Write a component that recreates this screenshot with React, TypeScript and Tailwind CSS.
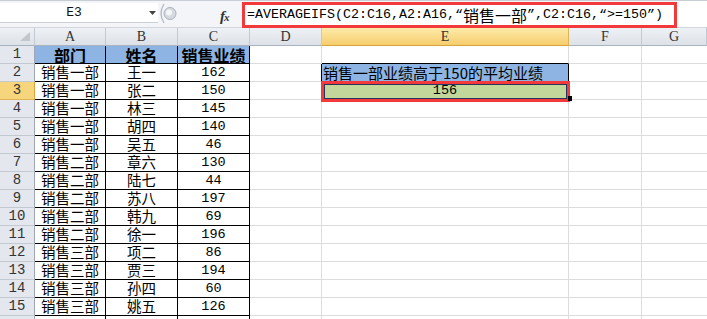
import React from "react";

const MONO = { fontFamily: '"Liberation Mono", "Noto Sans CJK SC", monospace' };

const rows: [string, string, string][] = [
  ["销售一部", "王一", "162"],
  ["销售一部", "张二", "150"],
  ["销售一部", "林三", "145"],
  ["销售一部", "胡四", "140"],
  ["销售一部", "吴五", "46"],
  ["销售二部", "章六", "130"],
  ["销售二部", "陆七", "44"],
  ["销售二部", "苏八", "197"],
  ["销售二部", "韩九", "69"],
  ["销售二部", "徐一", "196"],
  ["销售三部", "项二", "86"],
  ["销售三部", "贾三", "194"],
  ["销售三部", "孙四", "60"],
  ["销售三部", "姚五", "126"],
];

function ColHead({ label, w, active }: { label: string; w: string; active?: boolean }) {
  return (
    <div
      className={`${w} h-full flex items-center justify-center border-r border-b text-[14px] text-[#333] font-['Liberation_Serif',serif] ${
        active
          ? "bg-linear-to-b from-[#fdeba9] to-[#f6cd6c] border-r-[#e0b352] border-b-[#d9a43c]"
          : "bg-linear-to-b from-[#eef1f5] to-[#dde2e8] border-r-[#c3c9d1] border-b-[#a9b3bf]"
      }`}
    >
      {label}
    </div>
  );
}

function RowHead({ n, active }: { n: number; active?: boolean }) {
  return (
    <div
      style={MONO}
      className={`w-[35px] h-full flex items-center justify-center border-r border-b text-[14px] text-[#333] ${
        active
          ? "bg-[#f7d57d] border-r-[#d9a43c] border-b-[#e0b352]"
          : "bg-[#e4e8ee] border-r-[#9ea7b3] border-b-[#c3c9d1]"
      }`}
    >
      {n}
    </div>
  );
}

export default function App() {
  return (
    <div className="w-[707px] h-[319px] overflow-hidden bg-white flex flex-col">
      {/* formula bar */}
      <div className="h-[3px] bg-[#eef0f3] border-b border-[#c9ced5]" />
      <div className="h-[27px] flex bg-[#f3f5f8] border-b border-[#d2d6dc]">
        <div className="w-[158px] h-[20px] mt-[2px] bg-white border-b border-[#c9ced5] flex items-center relative">
          <span style={MONO} className="w-[148px] text-center text-[13px] text-[#111]">
            E3
          </span>
          <svg width="8" height="6" className="absolute left-[149px] top-[8px]">
            <path d="M0 0 L7 0 L3.5 4 Z" fill="#444" />
          </svg>
        </div>
        <div className="w-[84px] flex items-center relative">
          <svg width="30" height="26" viewBox="0 0 30 26" className="shrink-0">
            <path d="M6 3 Q0 12.5 6 22" stroke="#b3b9c2" strokeWidth="1.3" fill="none" />
            <circle cx="12" cy="12.5" r="6" fill="#d6dae0" stroke="#aab1bb" />
            <circle cx="11" cy="11.5" r="3" fill="#f4f5f7" />
          </svg>
          <span className="absolute left-[62px] top-[4px] italic font-bold text-[15px] text-[#333] font-['Liberation_Serif',serif] tracking-[-1px]">
            f<span className="text-[11px]">x</span>
          </span>
        </div>
        <div className="w-[435px] h-[26px] mt-[1px] bg-white border-[3px] border-[#f23a3d] flex items-center pl-[2px] text-black leading-none whitespace-nowrap">
          <span style={MONO} className="text-[13.33px]">=AVERAGEIFS(C2:C16,A2:A16,“</span>
          <span className="text-[16px] font-['Noto_Sans_CJK_SC',sans-serif]">销售一部</span>
          <span style={MONO} className="text-[13.33px]">”,C2:C16,“&gt;=150”)</span>
        </div>
        <div className="flex-1 bg-white" />
      </div>

      {/* column headers */}
      <div className="h-[18px] flex shrink-0">
        <div className="w-[35px] h-full bg-linear-to-b from-[#eef1f5] to-[#dde2e8] border-r border-b border-r-[#c3c9d1] border-b-[#a9b3bf] relative">
          <svg width="12" height="10" className="absolute right-[3px] bottom-[3px]">
            <path d="M11 0 L11 9 L1 9 Z" fill="#c2c7ce" />
          </svg>
        </div>
        <ColHead label="A" w="w-[71px]" />
        <ColHead label="B" w="w-[72px]" />
        <ColHead label="C" w="w-[72px]" />
        <ColHead label="D" w="w-[72px]" />
        <ColHead label="E" w="w-[247px]" active />
        <ColHead label="F" w="w-[73px]" />
        <ColHead label="G" w="flex-1" />
      </div>

      {/* row 1 */}
      <div className="h-[18px] flex shrink-0">
        <RowHead n={1} />
        {["部门", "姓名", "销售业绩"].map((t, i) => (
          <div
            key={t}
            className={`${i === 0 ? "w-[71px]" : "w-[72px]"} h-full bg-[#8db4e2] border-r border-b border-black flex items-center justify-center font-bold text-[16px] leading-none text-black font-['Noto_Sans_CJK_SC',sans-serif]`}
          >
            {t}
          </div>
        ))}
        <div className="w-[72px] h-full border-r border-b border-[#dadcdd]" />
        <div className="w-[247px] h-full border-r border-b border-r-[#dadcdd] border-b-black" />
        <div className="w-[73px] h-full border-r border-b border-[#dadcdd]" />
        <div className="flex-1 h-full border-b border-[#dadcdd]" />
      </div>

      {rows.map(([dept, name, score], idx) => {
        const n = idx + 2;
        return (
          <div key={n} className="h-[18px] flex shrink-0">
            <RowHead n={n} active={n === 3} />
            <div className="w-[71px] h-full border-r border-b border-black flex items-center justify-center text-[14.5px] leading-none text-black font-['Noto_Sans_CJK_SC',sans-serif]">
              {dept}
            </div>
            <div className="w-[72px] h-full border-r border-b border-black flex items-center justify-center text-[14.5px] leading-none text-black font-['Noto_Sans_CJK_SC',sans-serif]">
              {name}
            </div>
            <div style={MONO} className="w-[72px] h-full border-r border-b border-black flex items-center justify-center text-[13.5px] leading-none text-black">
              {score}
            </div>
            <div className={`w-[72px] h-full border-r border-b border-b-[#dadcdd] ${n === 2 ? "border-r-black" : "border-r-[#dadcdd]"}`} />
            {n === 2 ? (
              <div className="w-[247px] h-full bg-[#8db4e2] border-r border-b border-black flex items-center pl-[1px] text-[15px] leading-none text-black whitespace-nowrap font-['Noto_Sans_CJK_SC',sans-serif]">
                销售一部业绩高于150的平均业绩
              </div>
            ) : n === 3 ? (
              <div style={MONO} className="w-[247px] h-full bg-[#c4d79b] border-r border-b border-[#dadcdd] flex items-center justify-center text-[13.5px] leading-none text-black relative">
                156
                <div className="absolute top-[-1px] left-[-1px] right-[-2px] bottom-[-3px] border-[3px] border-[#f23a3d] z-10">
                  <div className="w-full h-full border border-[#27345c]" />
                </div>
                <div className="absolute right-[-4px] bottom-[-2px] w-[4px] h-[5px] bg-black z-20" />
              </div>
            ) : (
              <div className="w-[247px] h-full border-r border-b border-[#dadcdd]" />
            )}
            <div className="w-[73px] h-full border-r border-b border-[#dadcdd]" />
            <div className="flex-1 h-full border-b border-[#dadcdd]" />
          </div>
        );
      })}

      {/* row 16, mostly cut off */}
      <div className="h-[18px] flex shrink-0">
        <div className="w-[35px] h-full bg-[#e4e8ee] border-r border-[#9ea7b3]" />
        <div className="w-[71px] h-full border-r border-black" />
        <div className="w-[72px] h-full border-r border-black" />
        <div className="w-[72px] h-full border-r border-black" />
        <div className="w-[72px] h-full border-r border-[#dadcdd]" />
        <div className="w-[247px] h-full border-r border-[#dadcdd]" />
        <div className="w-[73px] h-full border-r border-[#dadcdd]" />
      </div>
    </div>
  );
}
